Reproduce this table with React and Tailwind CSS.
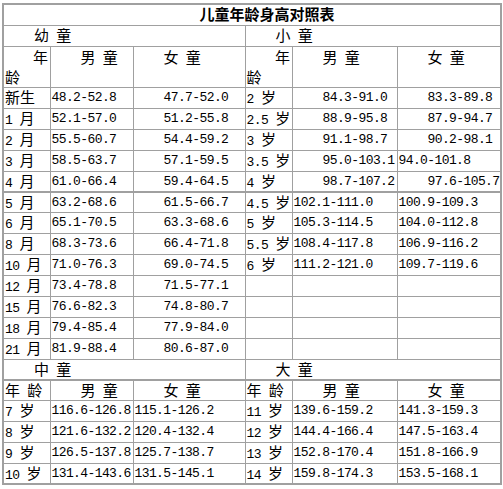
import React from 'react';

const youTong = [
  ['新生', '48.2-52.8', '47.7-52.0'],
  ['1 月', '52.1-57.0', '51.2-55.8'],
  ['2 月', '55.5-60.7', '54.4-59.2'],
  ['3 月', '58.5-63.7', '57.1-59.5'],
  ['4 月', '61.0-66.4', '59.4-64.5'],
  ['5 月', '63.2-68.6', '61.5-66.7'],
  ['6 月', '65.1-70.5', '63.3-68.6'],
  ['8 月', '68.3-73.6', '66.4-71.8'],
  ['10 月', '71.0-76.3', '69.0-74.5'],
  ['12 月', '73.4-78.8', '71.5-77.1'],
  ['15 月', '76.6-82.3', '74.8-80.7'],
  ['18 月', '79.4-85.4', '77.9-84.0'],
  ['21 月', '81.9-88.4', '80.6-87.0'],
];

// age, boy, girl, boy indented, girl indented
const xiaoTong = [
  ['2 岁', '84.3-91.0', '83.3-89.8', true, true],
  ['2.5 岁', '88.9-95.8', '87.9-94.7', true, true],
  ['3 岁', '91.1-98.7', '90.2-98.1', true, true],
  ['3.5 岁', '95.0-103.1', '94.0-101.8', true, false],
  ['4 岁', '98.7-107.2', '97.6-105.7', true, true],
  ['4.5 岁', '102.1-111.0', '100.9-109.3', false, false],
  ['5 岁', '105.3-114.5', '104.0-112.8', false, false],
  ['5.5 岁', '108.4-117.8', '106.9-116.2', false, false],
  ['6 岁', '111.2-121.0', '109.7-119.6', false, false],
  ['', '', '', false, false],
  ['', '', '', false, false],
  ['', '', '', false, false],
  ['', '', '', false, false],
];

const zhongDa = [
  ['7 岁', '116.6-126.8', '115.1-126.2', '11 岁', '139.6-159.2', '141.3-159.3'],
  ['8 岁', '121.6-132.2', '120.4-132.4', '12 岁', '144.4-166.4', '147.5-163.4'],
  ['9 岁', '126.5-137.8', '125.7-138.7', '13 岁', '152.8-170.4', '151.8-166.9'],
  ['10 岁', '131.4-143.6', '131.5-145.1', '14 岁', '159.8-174.3', '153.5-168.1'],
];

// CJK glyphs are set larger than the monospaced digits, like SimSun
const Txt = ({ s }) => {
  const runs = [];
  let buf = '';
  let cjk = null;
  for (const ch of s) {
    const c = /[\u4e00-\u9fff]/.test(ch);
    if (cjk !== null && c !== cjk) {
      runs.push([buf, cjk]);
      buf = '';
    }
    buf += ch;
    cjk = c;
  }
  if (buf) runs.push([buf, cjk]);
  return runs.map(([t, c], i) =>
    c ? (
      <span key={i} className="text-[15px] tracking-normal font-['Noto_Sans_CJK_SC',sans-serif]">
        {t}
      </span>
    ) : (
      <span key={i} className="whitespace-pre">{t}</span>
    )
  );
};

const Cell = ({ s = '', indent = false, thick = false, span, top = false }) => (
  <td
    colSpan={span}
    className={`border-x border-b border-[#a0a0a0] whitespace-nowrap overflow-hidden p-0 ${
      thick ? 'border-t-2' : 'border-t'
    } ${indent ? 'pl-[30px]' : 'pl-px'} ${top ? 'align-top pt-[2px]' : 'align-middle'}`}
  >
    <Txt s={s} />
  </td>
);

const AgeHead = () => (
  <td className="border border-[#a0a0a0] p-0 align-top">
    <div className="flex flex-col leading-[20px] text-[15px] font-['Noto_Sans_CJK_SC',sans-serif]">
      <span className="text-right pr-[2px]">年</span>
      <span className="pl-px">龄</span>
    </div>
  </td>
);

export default function App() {
  return (
    <div className="bg-white w-[503px] h-[489px] pt-[3px] pl-[2px]">
      <table className="table-fixed w-[498px] border-collapse border-2 border-[#a0a0a0] text-black text-[13px] tracking-[-0.6px] leading-none font-['Liberation_Mono','Noto_Sans_CJK_SC',monospace]">
        <colgroup>
          <col className="w-[47px]" />
          <col className="w-[83px]" />
          <col className="w-[112px]" />
          <col className="w-[47px]" />
          <col className="w-[105px]" />
          <col className="w-[104px]" />
        </colgroup>
        <tbody>
          <tr className="h-[21px]">
            <td colSpan={6} className="border border-[#a0a0a0] p-0 pl-[30px] text-center align-middle">
              <span className="text-[15px] font-bold tracking-normal font-['Noto_Sans_CJK_SC',sans-serif]">
                儿童年龄身高对照表
              </span>
            </td>
          </tr>
          <tr className="h-[21px]">
            <Cell s="幼 童" span={3} indent />
            <Cell s="小 童" span={3} indent />
          </tr>
          <tr className="h-[41px]">
            <AgeHead />
            <Cell s="男 童" indent top />
            <Cell s="女 童" indent top />
            <AgeHead />
            <Cell s="男 童" indent top />
            <Cell s="女 童" indent top />
          </tr>
          {youTong.map((row, i) => {
            const r = xiaoTong[i];
            const thick = i === 5;
            return (
              <tr key={i} className={thick ? 'h-[20px]' : 'h-[21px]'}>
                <Cell s={row[0]} thick={thick} />
                <Cell s={row[1]} thick={thick} />
                <Cell s={row[2]} thick={thick} indent />
                <Cell s={r[0]} thick={thick} />
                <Cell s={r[1]} thick={thick} indent={r[3]} />
                <Cell s={r[2]} thick={thick} indent={r[4]} />
              </tr>
            );
          })}
          <tr className="h-[21px]">
            <Cell s="中 童" span={3} indent />
            <Cell s="大 童" span={3} indent />
          </tr>
          <tr className="h-[20px]">
            <Cell s="年 龄" thick />
            <Cell s="男 童" thick indent />
            <Cell s="女 童" thick indent />
            <Cell s="年 龄" thick />
            <Cell s="男 童" thick indent />
            <Cell s="女 童" thick indent />
          </tr>
          {zhongDa.map((row, i) => (
            <tr key={i} className="h-[21px]">
              {row.map((s, j) => (
                <Cell key={j} s={s} />
              ))}
            </tr>
          ))}
        </tbody>
      </table>
    </div>
  );
}
